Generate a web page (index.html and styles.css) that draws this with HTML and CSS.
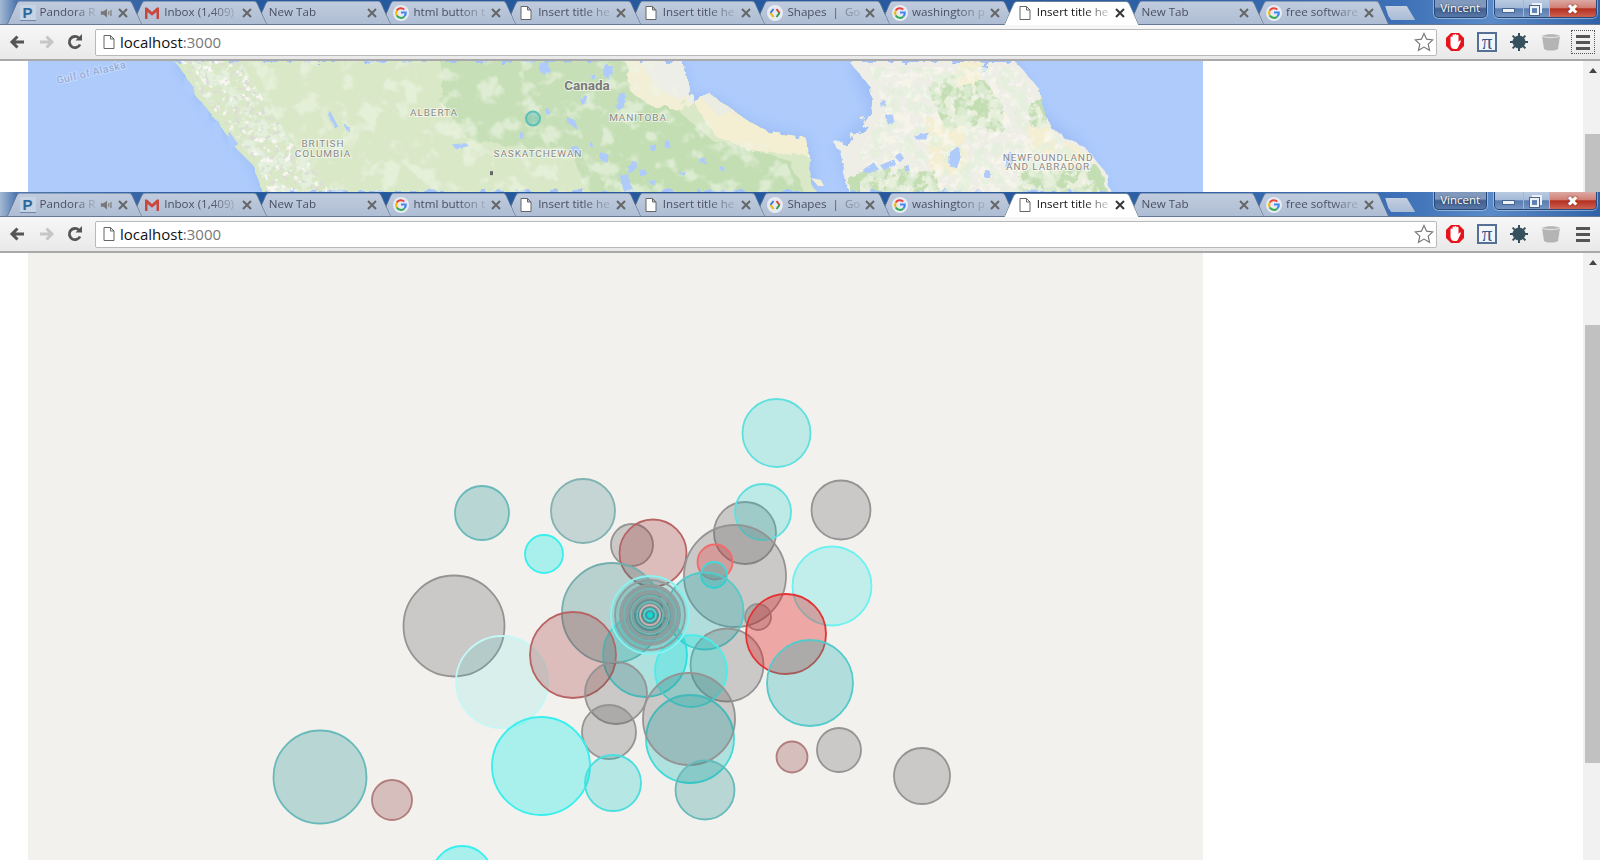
FILE: index.html
```html
<!DOCTYPE html>
<html lang="en">

<head>
    <meta charset="UTF-8">
    <title>Insert title here</title>
    <link rel="stylesheet" href="styles.css">
</head>

<body>
    <svg class="defs" width="0" height="0">
        <symbol id="i-page" viewBox="0 0 16 16"><path d="M3 1.500h6.500L13 5v9.500H3z M9.500 1.500V5H13" fill="#fff" stroke="#666" stroke-width="1"/></symbol>
        <symbol id="i-close" viewBox="0 0 12 12"><path d="M2 2l8 8M10 2l-8 8" stroke="#666" stroke-width="2" fill="none"/></symbol>
        <symbol id="i-speaker" viewBox="0 0 16 12"><path d="M1 4h3l4-3v10L4 8H1z" fill="#777"/><path d="M10 4v4M12.500 2.500v7" stroke="#777" stroke-width="1.300"/></symbol>
        <symbol id="i-gmail" viewBox="0 0 16 16"><path d="M1 14V2.500h2L8 7l5-4.500h2V14h-2.500V7L8 10.800 3.500 7v7z" fill="#c9473f"/></symbol>
        <symbol id="i-google" viewBox="0 0 16 16">
            <circle cx="8" cy="8" r="8" fill="#e6ebf2"/>
            <path d="M3.800 5.500A4.800 4.800 0 0 1 11.300 4.600" stroke="#e8453c" stroke-width="2" fill="none"/>
            <path d="M3.800 5.500A4.800 4.800 0 0 0 3.800 10.500" stroke="#f4b400" stroke-width="2" fill="none"/>
            <path d="M3.800 10.500A4.800 4.800 0 0 0 11.500 11.300" stroke="#34a853" stroke-width="2" fill="none"/>
            <path d="M11.500 11.300A4.800 4.800 0 0 0 12.800 7.500H8" stroke="#4285f4" stroke-width="2" fill="none"/>
        </symbol>
        <symbol id="i-shapes" viewBox="0 0 16 16">
            <circle cx="8" cy="8" r="8" fill="#e6ebf2"/>
            <path d="M6.500 4 3.500 8" stroke="#3f77d8" stroke-width="2" fill="none"/>
            <path d="M3.500 8l3 4" stroke="#f4b400" stroke-width="2" fill="none"/>
            <path d="M9.500 4l3 4" stroke="#d9432f" stroke-width="2" fill="none"/>
            <path d="M12.500 8l-3 4" stroke="#2f9e55" stroke-width="2" fill="none"/>
        </symbol>
        <symbol id="i-back" viewBox="0 0 18 18"><path d="M16 9H5M9.500 3.500 4 9l5.500 5.500" stroke="#555" stroke-width="3" fill="none"/></symbol>
        <symbol id="i-forward" viewBox="0 0 18 18"><path d="M2 9h11M8.500 3.500 14 9l-5.500 5.500" stroke="#c6c6c6" stroke-width="3" fill="none"/></symbol>
        <symbol id="i-reload" viewBox="0 0 18 18"><path d="M14 11.500A5.600 5.600 0 1 1 12.800 5" stroke="#555" stroke-width="2.800" fill="none"/><path d="M9.500 7.500h6.500V1z" fill="#555"/></symbol>
        <symbol id="i-star" viewBox="0 0 20 20"><path d="M10 1.500l2.600 5.700 6.200.7-4.600 4.200 1.300 6.100L10 15.100l-5.500 3.100 1.300-6.100L1.200 7.900l6.200-.7z" fill="#fff" stroke="#777" stroke-width="1.200"/></symbol>
        <symbol id="i-adblock" viewBox="0 0 20 20">
            <path d="M6 1h8l5 5v8l-5 5H6l-5-5V6z" fill="#e8141c"/>
            <path d="M5.500 9V5.500a1 1 0 0 1 2 0V3.500a1 1 0 0 1 2 0V3a1 1 0 0 1 2 0v.8a1 1 0 0 1 2 0V10l1-1.200c.8-.6 1.800.1 1.200 1L13 15.500c-.4.800-1 1.500-2 1.500H9.500c-2.500 0-4-2-4-4.500z" fill="#fff"/>
        </symbol>
        <symbol id="i-burst" viewBox="0 0 20 20">
            <path d="M10 1v18M1 10h18M3.600 3.600l12.800 12.800M16.400 3.600 3.600 16.400" stroke="#37505e" stroke-width="2"/>
            <circle cx="10" cy="10" r="6.500" fill="#37505e"/>
        </symbol>
        <symbol id="i-cup" viewBox="0 0 20 20">
            <path d="M1 4c3-2.500 15-2.500 18 0l-2 13c-3 2-11 2-14 0z" fill="#b4b4b4"/>
            <path d="M1 4c3 2 15 2 18 0" stroke="#dcdcdc" stroke-width="1.500" fill="none"/>
        </symbol>
        <filter id="rough" x="-5%" y="-20%" width="110%" height="140%">
            <feTurbulence type="fractalNoise" baseFrequency="0.08" numOctaves="4" seed="4"/>
            <feDisplacementMap in="SourceGraphic" scale="14"/>
        </filter>
        <filter id="rough-small" x="-5%" y="-20%" width="110%" height="140%">
            <feTurbulence type="fractalNoise" baseFrequency="0.22" numOctaves="2" seed="9"/>
            <feDisplacementMap in="SourceGraphic" scale="4"/>
        </filter>
        <filter id="soft" x="-10%" y="-30%" width="120%" height="160%"><feGaussianBlur stdDeviation="7"/></filter>
        <filter id="snow" x="0" y="0" width="100%" height="100%">
            <feTurbulence type="fractalNoise" baseFrequency="0.14" numOctaves="3" seed="2"/>
            <feColorMatrix values="0 0 0 0 0.94  0 0 0 0 0.93  0 0 0 0 0.90  7 0 0 0 -4"/>
        </filter>
        <filter id="rock" x="0" y="0" width="100%" height="100%">
            <feTurbulence type="fractalNoise" baseFrequency="0.2" numOctaves="3" seed="7"/>
            <feColorMatrix values="0 0 0 0 0.72  0 0 0 0 0.72  0 0 0 0 0.68  8 0 0 0 -4.500"/>
        </filter>
        <filter id="moss" x="0" y="0" width="100%" height="100%">
            <feTurbulence type="fractalNoise" baseFrequency="0.07" numOctaves="3" seed="12"/>
            <feColorMatrix values="0 0 0 0 0.77  0 0 0 0 0.87  0 0 0 0 0.71  9 0 0 0 -4.300"/>
        </filter>
        <filter id="pale" x="0" y="0" width="100%" height="100%">
            <feTurbulence type="fractalNoise" baseFrequency="0.05" numOctaves="3" seed="21"/>
            <feColorMatrix values="0 0 0 0 0.85  0 0 0 0 0.91  0 0 0 0 0.78  6 0 0 0 -3.100"/>
        </filter>
        <filter id="straw" x="0" y="0" width="100%" height="100%">
            <feTurbulence type="fractalNoise" baseFrequency="0.09" numOctaves="3" seed="31"/>
            <feColorMatrix values="0 0 0 0 0.96  0 0 0 0 0.93  0 0 0 0 0.82  9 0 0 0 -4.600"/>
        </filter>
        <clipPath id="rockies-clip"><path d="M180 60 205 98 232 132 258 165 268 192H330L300 150 270 110 240 60z"/></clipPath>
        <clipPath id="west-clip"><path d="M240 60 270 110 300 150 330 192H800L780 150 715 125 680 100 670 60z"/></clipPath>
        <clipPath id="east-clip"><path d="M870 66 885 110 860 150 860 192H1100L1085 160 1050 130 1032 90 1015 66z"/></clipPath>
    </svg>

    <div class="window window-top">
        <div class="tabstrip">
            <div class="tab"><span class="fav-p">P</span><span class="tab-title short">Pandora R</span><svg class="speaker"><use href="#i-speaker"/></svg><svg class="x"><use href="#i-close"/></svg></div>
            <div class="tab"><svg class="fav"><use href="#i-gmail"/></svg><span class="tab-title">Inbox (1,409)</span><svg class="x"><use href="#i-close"/></svg></div>
            <div class="tab no-fav"><span class="tab-title">New Tab</span><svg class="x"><use href="#i-close"/></svg></div>
            <div class="tab"><svg class="fav"><use href="#i-google"/></svg><span class="tab-title">html button t</span><svg class="x"><use href="#i-close"/></svg></div>
            <div class="tab"><svg class="fav"><use href="#i-page"/></svg><span class="tab-title">Insert title he</span><svg class="x"><use href="#i-close"/></svg></div>
            <div class="tab"><svg class="fav"><use href="#i-page"/></svg><span class="tab-title">Insert title he</span><svg class="x"><use href="#i-close"/></svg></div>
            <div class="tab"><svg class="fav"><use href="#i-shapes"/></svg><span class="tab-title">Shapes &nbsp;|&nbsp; Go</span><svg class="x"><use href="#i-close"/></svg></div>
            <div class="tab"><svg class="fav"><use href="#i-google"/></svg><span class="tab-title">washington p</span><svg class="x"><use href="#i-close"/></svg></div>
            <div class="tab active"><svg class="fav"><use href="#i-page"/></svg><span class="tab-title">Insert title he</span><svg class="x"><use href="#i-close"/></svg></div>
            <div class="tab no-fav"><span class="tab-title">New Tab</span><svg class="x"><use href="#i-close"/></svg></div>
            <div class="tab"><svg class="fav"><use href="#i-google"/></svg><span class="tab-title">free software</span><svg class="x"><use href="#i-close"/></svg></div>
            <div class="new-tab"></div>
            <div class="win-area">
                <div class="profile">Vincent</div>
                <div class="win-controls">
                    <div class="win-btn win-min"><span></span></div>
                    <div class="win-btn win-max"><span></span></div>
                    <div class="win-btn win-close">✖</div>
                </div>
            </div>
        </div>
        <div class="toolbar">
            <svg class="nav"><use href="#i-back"/></svg>
            <svg class="nav"><use href="#i-forward"/></svg>
            <svg class="nav"><use href="#i-reload"/></svg>
            <div class="omnibox">
                <svg class="omni-page"><use href="#i-page"/></svg>
                <span class="url">localhost<span class="url-port">:3000</span></span>
                <svg class="omni-star"><use href="#i-star"/></svg>
            </div>
            <div class="extensions">
                <svg class="ext"><use href="#i-adblock"/></svg>
                <div class="ext pi">π</div>
                <svg class="ext"><use href="#i-burst"/></svg>
                <svg class="ext"><use href="#i-cup"/></svg>
                <div class="menu focused"><span></span><span></span><span></span></div>
            </div>
        </div>
        <div class="page">
            <div class="page-main">
                <svg class="map" viewBox="28 60 1175 132" preserveAspectRatio="none">
                    <rect x="28" y="60" width="1175" height="132" fill="#aecbfc"/>
                    <g filter="url(#soft)" fill="#93b6f3" opacity=".65">
                        <path d="M174 60 198 98 225 132 253 165 261 192H816L808 138 750 122 711 94 691 98 683 60z"/>
                        <path d="M849 60 871 112 837 145 849 192H1110L1083 145 1043 112 1015 60z"/>
                    </g>
                    <g filter="url(#rough)">
                        <!-- west land -->
                        <path fill="#d9e8c7" d="M174 60 186 75 198 98 210 112 225 132 233 145 253 165 261 192H816L810 178 808 155 806 138 770 132 750 122 727 105 711 94 691 98 683 60z"/>
                        <path fill="#c6dfb6" d="M440 60H640L650 100 680 110 700 192H590L570 150 470 140 440 100z"/>
                        <path fill="#f3efd6" d="M625 60H683L691 98 680 110 650 105 630 90z"/>
                        <path fill="#c3deb3" d="M620 105 650 104 680 112 712 140 790 160 803 192H600z"/>
                        <path fill="#f4eed2" d="M691 98 711 94 727 105 750 122 770 132 806 138 808 155 775 152 745 150 715 135z"/>
                        <path fill="#eeeee8" d="M683 60H640L655 85 680 100 691 98z"/>
                        <path fill="#ecede2" d="M700 96 711 94 727 105 738 116 715 112z"/>
                        <!-- east land -->
                        <path fill="#eeeee7" d="M849 60 869 85 871 112 857 135 837 145 841 162 849 192H1110L1106 172 1083 145 1055 132 1043 112 1039 88 1015 60H988V72H968V60z"/>
                        <path fill="#f4eed2" d="M925 118 965 122 966 175 930 172z"/>
                        <path fill="#f4eed2" d="M1027 125 1052 125 1058 152 1030 155z"/>
                        <path fill="#c4deb4" d="M930 88 950 74 985 80 1005 108 1000 130 965 125 945 128z"/>
                        <path fill="#c4deb4" d="M1030 105 1042 95 1045 120 1034 130z"/>
                        <path fill="#c4deb4" d="M850 172 935 170 940 192H850z"/>
                        <path fill="#c4deb4" d="M1018 172 1100 168 1108 192H1018z"/>
                        <path fill="#f4eed2" d="M960 60 985 62 975 85 955 85z"/>
                        <path fill="#f4eed2" d="M1065 140 1090 155 1080 170 1060 162z"/>
                    </g>
                    <path fill="#f2eed6" d="M811 178l10 2 3 6-6 0z"/>
                    <g clip-path="url(#west-clip)">
                        <rect x="240" y="60" width="570" height="132" filter="url(#pale)" opacity=".6"/>
                    </g>
                    <g clip-path="url(#east-clip)">
                        <rect x="860" y="60" width="250" height="132" filter="url(#straw)" opacity=".7"/>
                        <rect x="860" y="60" width="250" height="132" filter="url(#moss)" opacity=".7"/>
                        <rect x="860" y="60" width="250" height="132" filter="url(#snow)" opacity=".6"/>
                    </g>
                    <g clip-path="url(#rockies-clip)">
                        <rect x="170" y="60" width="170" height="132" filter="url(#moss)"/>
                        <rect x="170" y="60" width="170" height="132" filter="url(#snow)"/>
                        <rect x="170" y="60" width="170" height="132" filter="url(#rock)"/>
                    </g>
                    <g filter="url(#rough-small)" fill="#aecbfc">
                        <!-- islands and fjords on the west coast -->
                        <path d="M185 76l10 12-3 10-9-10zM201 100l8 12-2 10-8-12zM216 118l6 14-4 8-6-14zM230 132l7 10-3 8-7-8z"/>
                        <!-- lakes -->
                        <path d="M540 62l8-1 2 8-6 5-5-5zM605 64l7 0 1 8-6 6-5-6zM592 74l3 0 0 4-4 1zM580 98l6-4 1 8-5 2zM620 94l5-2 0 12-6 6-3-4zM567 116l8 4 3 10-5-4-6-4zM545 108l4 0 1 6-4 0zM452 144l14-1 3 3-14 2zM570 146l8 0 2 8-8 0zM600 152l8 2 0 8-8-2zM520 132l4 0 0 6-4 0zM330 110l8 16-3 2-7-14zM345 124l6 4-1 4-5-4zM590 142l3 0 0 5-3 0zM628 166l8-6 1 8-8 6zM650 146l6-2 0 6-5 1zM665 140l5 0 0 6-5 1zM640 170l6-1 0 6-6 1zM650 180l6 0-2 5-5-1zM700 158l5 0 1 5-6 0zM720 166l4 1 0 3-4 0zM680 172l6 0 0 3-5 0zM620 176l8-2 4 14-8 4z"/>
                        <path d="M885 115l8-1 1 7-6 3zM915 135l14-3-3 7-10 0zM950 152l8-6 3 10-4 12-8-2zM862 170l12-8 4 6-10 6zM880 165l14-6 2 5-12 6zM896 158l4-6 4 6-4 4zM905 165l4 0 0 6-4 0zM880 100l6 0 0 4-6 2zM1005 155l6-4 2 8-6 10zM985 170l5 0 0 8-5 0z"/>
                    </g>
                    <g class="map-labels">
                        <text class="ml-sea" transform="translate(92 75) rotate(-13.500)">Gulf of Alaska</text>
                        <text class="ml-country" x="587" y="89">Canada</text>
                        <text class="ml-prov" x="434" y="115">ALBERTA</text>
                        <text class="ml-prov" x="323" y="147">BRITISH</text>
                        <text class="ml-prov" x="323" y="157">COLUMBIA</text>
                        <text class="ml-prov" x="538" y="157">SASKATCHEWAN</text>
                        <text class="ml-prov" x="638" y="120">MANITOBA</text>
                        <text class="ml-prov" x="1048" y="161">NEWFOUNDLAND</text>
                        <text class="ml-prov" x="1048" y="170">AND LABRADOR</text>
                    </g>
                    <rect x="490" y="171" width="3" height="4" fill="#666"/>
                    <circle cx="533" cy="118" r="7" class="c-teal-map"/>
                </svg>
            </div>
            <div class="scrollbar scroll-top"><div class="scroll-arrow"></div><div class="scroll-thumb"></div></div>
        </div>
    </div>

    <div class="window window-bottom">
        <div class="tabstrip">
            <div class="tab"><span class="fav-p">P</span><span class="tab-title short">Pandora R</span><svg class="speaker"><use href="#i-speaker"/></svg><svg class="x"><use href="#i-close"/></svg></div>
            <div class="tab"><svg class="fav"><use href="#i-gmail"/></svg><span class="tab-title">Inbox (1,409)</span><svg class="x"><use href="#i-close"/></svg></div>
            <div class="tab no-fav"><span class="tab-title">New Tab</span><svg class="x"><use href="#i-close"/></svg></div>
            <div class="tab"><svg class="fav"><use href="#i-google"/></svg><span class="tab-title">html button t</span><svg class="x"><use href="#i-close"/></svg></div>
            <div class="tab"><svg class="fav"><use href="#i-page"/></svg><span class="tab-title">Insert title he</span><svg class="x"><use href="#i-close"/></svg></div>
            <div class="tab"><svg class="fav"><use href="#i-page"/></svg><span class="tab-title">Insert title he</span><svg class="x"><use href="#i-close"/></svg></div>
            <div class="tab"><svg class="fav"><use href="#i-shapes"/></svg><span class="tab-title">Shapes &nbsp;|&nbsp; Go</span><svg class="x"><use href="#i-close"/></svg></div>
            <div class="tab"><svg class="fav"><use href="#i-google"/></svg><span class="tab-title">washington p</span><svg class="x"><use href="#i-close"/></svg></div>
            <div class="tab active"><svg class="fav"><use href="#i-page"/></svg><span class="tab-title">Insert title he</span><svg class="x"><use href="#i-close"/></svg></div>
            <div class="tab no-fav"><span class="tab-title">New Tab</span><svg class="x"><use href="#i-close"/></svg></div>
            <div class="tab"><svg class="fav"><use href="#i-google"/></svg><span class="tab-title">free software</span><svg class="x"><use href="#i-close"/></svg></div>
            <div class="new-tab"></div>
            <div class="win-area">
                <div class="profile">Vincent</div>
                <div class="win-controls">
                    <div class="win-btn win-min"><span></span></div>
                    <div class="win-btn win-max"><span></span></div>
                    <div class="win-btn win-close">✖</div>
                </div>
            </div>
        </div>
        <div class="toolbar">
            <svg class="nav"><use href="#i-back"/></svg>
            <svg class="nav"><use href="#i-forward"/></svg>
            <svg class="nav"><use href="#i-reload"/></svg>
            <div class="omnibox">
                <svg class="omni-page"><use href="#i-page"/></svg>
                <span class="url">localhost<span class="url-port">:3000</span></span>
                <svg class="omni-star"><use href="#i-star"/></svg>
            </div>
            <div class="extensions">
                <svg class="ext"><use href="#i-adblock"/></svg>
                <div class="ext pi">π</div>
                <svg class="ext"><use href="#i-burst"/></svg>
                <svg class="ext"><use href="#i-cup"/></svg>
                <div class="menu"><span></span><span></span><span></span></div>
            </div>
        </div>
        <div class="page">
            <div class="page-main">
                <svg class="bubbles" viewBox="28 253 1175 607">
                    <rect x="28" y="253" width="1175" height="607" fill="#f2f1ee"/>
                    <circle class="aqua-pale" cx="776.500" cy="433" r="34"/>
                    <circle class="teal" cx="482" cy="513" r="27"/>
                    <circle class="slate" cx="583" cy="511" r="32"/>
                    <circle class="grey" cx="841" cy="510" r="29.500"/>
                    <circle class="grey" cx="745" cy="533" r="31"/>
                    <circle class="aqua-pale" cx="763" cy="512" r="28"/>
                    <circle class="cyan" cx="544" cy="554" r="19"/>
                    <circle class="grey" cx="632" cy="545" r="21"/>
                    <circle class="maroon" cx="653" cy="553" r="33.500"/>
                    <circle class="grey" cx="735" cy="576" r="51"/>
                    <circle class="rose" cx="715" cy="562" r="17.500"/>
                    <circle class="aqua-strong" cx="714" cy="575" r="13"/>
                    <circle class="cyan-pale" cx="832" cy="586" r="39.500"/>
                    <circle class="slate-dark" cx="612" cy="613" r="50"/>
                    <circle class="aqua" cx="705" cy="611" r="38.500"/>
                    <circle class="grey" cx="758" cy="617" r="13"/>
                    <circle class="grey" cx="454" cy="626" r="50.500"/>
                    <circle class="cyan-faint" cx="502" cy="682" r="46"/>
                    <circle class="aqua-strong" cx="645" cy="655" r="42"/>
                    <circle class="maroon" cx="573" cy="655" r="43"/>
                    <circle class="grey" cx="727" cy="665" r="36.500"/>
                    <circle class="cyan-mid" cx="691" cy="671" r="36"/>
                    <circle class="red" cx="786" cy="634" r="40"/>
                    <circle class="aqua" cx="810" cy="683" r="43"/>
                    <circle class="grey" cx="616" cy="693" r="31"/>
                    <circle class="aqua-strong" cx="690" cy="739" r="44"/>
                    <circle class="grey" cx="689" cy="719" r="46"/>
                    <circle class="grey" cx="609" cy="732" r="27"/>
                    <circle class="cyan" cx="541" cy="766" r="49"/>
                    <circle class="aqua-mid" cx="613" cy="783" r="28"/>
                    <circle class="teal" cx="705" cy="790" r="29.500"/>
                    <circle class="grey" cx="839" cy="750" r="22"/>
                    <circle class="wine" cx="792" cy="757" r="15.500"/>
                    <circle class="grey" cx="922" cy="776" r="28"/>
                    <circle class="teal" cx="320" cy="777" r="46.500"/>
                    <circle class="wine" cx="392" cy="800" r="20"/>
                    <circle class="cyan" cx="462" cy="876" r="30"/>
                    <!-- the bunch of points on the same spot -->
                    <circle class="ring-halo" cx="650" cy="615" r="39"/>
                    <circle class="ring-grey" cx="650" cy="615" r="35"/>
                    <circle class="ring-grey" cx="650" cy="615" r="30"/>
                    <circle class="ring-grey" cx="650" cy="615" r="28"/>
                    <circle class="ring-teal" cx="650" cy="615" r="26"/>
                    <circle class="ring-grey" cx="650" cy="615" r="24"/>
                    <circle class="ring-grey" cx="650" cy="615" r="22"/>
                    <circle class="ring-teal" cx="650" cy="615" r="19"/>
                    <circle class="ring-grey" cx="650" cy="615" r="17"/>
                    <circle class="ring-teal" cx="650" cy="615" r="13"/>
                    <circle class="ring-rose" cx="650" cy="615" r="10"/>
                    <circle class="ring-cyan" cx="650" cy="615" r="6"/>
                    <circle class="dot" cx="650" cy="615" r="2"/>
                </svg>
            </div>
            <div class="scrollbar scroll-bottom"><div class="scroll-arrow"></div><div class="scroll-thumb"></div></div>
        </div>
    </div>
</body>

</html>
```

FILE: styles.css
```css
* {
    box-sizing: border-box;
}

html, body {
    margin: 0;
    height: 860px;
    overflow: hidden;
    background: #fff;
}

.defs {
    position: absolute;
}

.window {
    display: flex;
    flex-direction: column;
    overflow: hidden;
}
.window-top {
    height: 192px;
}
.window-bottom {
    height: 668px;
}

/* tab row */
.tabstrip {
    display: flex;
    flex: none;
    height: 25px;
    padding-left: 7px;
    border-bottom: 1px solid #66789a;
    background: linear-gradient(90deg, #a4b9d2 0, #4f78b1 16px, #255a9e 220px, #27599f 1000px, #3d70b6 1400px, #5a8ac8 1490px, #2f62a8 1600px);
}

.tab {
    position: relative;
    display: flex;
    flex: none;
    align-items: center;
    width: 135px;
    height: 23px;
    margin-top: 1px;
    margin-right: -10.350px;
    padding-left: 12.500px;
    font: 11.600px "Open Sans", sans-serif;
    color: #4b4f63;
}
.tab::before, .tab::after {
    content: "";
    position: absolute;
    z-index: -1;
    top: 0;
    bottom: 0;
    width: 60%;
    border-top: 1px solid #8c9db8;
    background: linear-gradient(#c0cbdd, #aebdd4);
}
.tab::before {
    left: 5px;
    border-left: 1px solid #64768f;
    border-top-left-radius: 3px;
    transform: skewX(-24deg);
}
.tab::after {
    right: 5px;
    border-right: 1px solid #64768f;
    border-top-right-radius: 3px;
    transform: skewX(24deg);
}
.tab:nth-child(1) { z-index: 11; }
.tab:nth-child(2) { z-index: 10; }
.tab:nth-child(3) { z-index: 9; }
.tab:nth-child(4) { z-index: 8; }
.tab:nth-child(5) { z-index: 7; }
.tab:nth-child(6) { z-index: 6; }
.tab:nth-child(7) { z-index: 5; }
.tab:nth-child(8) { z-index: 4; }
.tab:nth-child(10) { z-index: 3; }
.tab:nth-child(11) { z-index: 2; }
.tab.active {
    z-index: 12;
    color: #111;
}
.tab.active::before, .tab.active::after {
    bottom: -1px;
    background: #fff;
    border-color: #6f7f98;
}

.fav, .fav-p {
    flex: none;
    width: 16px;
    height: 16px;
    margin-right: 4px;
}
.fav-p {
    font: bold 15px/15px "Liberation Sans", sans-serif;
    text-align: center;
    color: #2a6a9e;
    background: #c7d2e2;
    border-bottom: 1px solid #6e88a8;
}
.tab-title {
    flex: none;
    width: 74px;
    margin-bottom: 2px;
    overflow: hidden;
    white-space: nowrap;
    mask-image: linear-gradient(90deg, #000 62%, rgba(0, 0, 0, .25) 94%);
}
.tab-title.short {
    width: 56px;
}
.tab.no-fav .tab-title {
    width: 94px;
}
.speaker {
    flex: none;
    width: 14px;
    height: 12px;
    margin-left: 4px;
}
.x {
    flex: none;
    width: 12px;
    height: 12px;
    margin-left: 3px;
}
.tab.active .x {
    filter: brightness(.55);
}

.new-tab {
    flex: none;
    width: 30px;
    height: 14px;
    margin: 6px 0 0 7px;
    background: linear-gradient(#c3cfe0, #a9bbd5);
    clip-path: polygon(0 0, 72% 0, 100% 100%, 20% 100%, 10% 70%);
}

.win-area {
    display: flex;
    gap: 7px;
    margin-left: 18.500px;
}
.profile {
    width: 53px;
    height: 18px;
    border: 1px solid #26477a;
    border-top: 0;
    border-radius: 0 0 5px 5px;
    font: 11.500px/16px "Open Sans", sans-serif;
    text-align: center;
    color: #fff;
    text-shadow: 0 0 2px #123;
    background: linear-gradient(#7f98bc 0, #8099bd 40%, #3f6093 52%, #5877a6 100%);
    box-shadow: 0 0 0 1px rgba(255, 255, 255, .4);
}
.win-controls {
    display: flex;
    height: 18px;
    width: 103px;
    border: 1px solid #26477a;
    border-top: 0;
    border-radius: 0 0 5px 5px;
    overflow: hidden;
    box-shadow: 0 0 0 1px rgba(255, 255, 255, .4);
}
.win-btn {
    display: flex;
    align-items: center;
    justify-content: center;
    border-right: 1px solid #a3b7d2;
    background: linear-gradient(#b9cbe2 0, #a4bad9 45%, #587cb0 52%, #7695c2 100%);
}
.win-min {
    width: 29px;
}
.win-min span {
    width: 13px;
    height: 5px;
    margin-top: 3px;
    background: #eef2f7;
    border: 1px solid #48658f;
}
.win-max {
    width: 26px;
}
.win-max span {
    position: relative;
    width: 9px;
    height: 9px;
    margin: 3px 3px 0 0;
    border: 2px solid #eef2f7;
    outline: 1px solid #48658f;
}
/* the second square behind, for the restore icon */
.win-max span::before {
    content: "";
    position: absolute;
    top: -5px;
    right: -5px;
    width: 8px;
    height: 8px;
    border-top: 2px solid #eef2f7;
    border-right: 2px solid #eef2f7;
}
.win-close {
    flex: 1;
    border-right: 0;
    font: 14px/1 "DejaVu Sans", sans-serif;
    color: #fff;
    text-shadow: 0 0 2px #6a1a10;
    background: linear-gradient(#dcaaa5 0, #d27f74 45%, #b5301f 52%, #cc6255 100%);
}

/* address bar row */
.toolbar {
    display: flex;
    flex: none;
    align-items: center;
    height: 36px;
    border-bottom: 2px solid #a9a9a9;
    background: linear-gradient(#f7f7f7, #e9e9e9);
}
.nav {
    flex: none;
    width: 18px;
    height: 18px;
    margin-left: 8px;
    margin-right: 4px;
}
.nav:nth-child(2) {
    margin-left: 8px;
}
.nav:nth-child(3) {
    margin-left: 6px;
}
.omnibox {
    display: flex;
    align-items: center;
    width: 1342px;
    height: 27px;
    margin-left: 7px;
    padding-left: 5px;
    border: 1px solid #b9b9b9;
    border-radius: 2px;
    background: #fff;
}
.omni-page {
    flex: none;
    width: 16px;
    height: 16px;
}
.url {
    margin-left: 3px;
    font: 15px "Open Sans", sans-serif;
    color: #111;
}
.url-port {
    color: #777;
}
.omni-star {
    width: 20px;
    height: 20px;
    margin-left: auto;
    margin-right: 2px;
}
.extensions {
    display: flex;
    gap: 12px;
    align-items: center;
    margin-left: 8px;
}
.ext {
    flex: none;
    width: 20px;
    height: 20px;
}
.pi {
    display: flex;
    align-items: center;
    justify-content: center;
    border: 2px solid #566f97;
    font: 21px/1 "Liberation Serif", serif;
    color: #3a5a8c;
    background: #f2f5f8;
}
.menu {
    display: flex;
    flex: none;
    flex-direction: column;
    gap: 3px;
    align-items: center;
    justify-content: center;
    width: 22px;
    height: 22px;
    margin-left: -1px;
}
.menu.focused {
    outline: 1px dotted #555;
}
.menu span {
    width: 14px;
    height: 3px;
    background: #555;
}

/* page area */
.page {
    display: flex;
    flex: 1;
    min-height: 0;
}
.page-main {
    flex: 1;
    min-width: 0;
    padding-left: 28px;
}
.map, .bubbles {
    display: block;
    width: 1175px;
    height: 100%;
}
.map-labels text {
    font-family: Roboto, sans-serif;
    text-anchor: middle;
    paint-order: stroke;
    stroke: rgba(255, 255, 255, .6);
    stroke-width: 2px;
    fill: #8a8a86;
}
.map-labels .ml-sea {
    font-size: 10.500px;
    letter-spacing: .4px;
    stroke: rgba(255, 255, 255, .3);
    fill: #8ea7d2;
}
.map-labels .ml-country {
    font-size: 13.500px;
    font-weight: 700;
    fill: #7a7a78;
}
.ml-prov {
    font-size: 10px;
    letter-spacing: .9px;
}
.c-teal-map {
    fill: rgba(40, 170, 170, .3);
    stroke: #5cc0ba;
    stroke-width: 2;
}

/* bubbles */
.bubbles circle:not(:first-child) {
    stroke-width: 1.800;
}
.grey { fill: rgba(85, 85, 85, .25); stroke: #949494; }
.slate { fill: rgba(55, 125, 125, .24); stroke: #7fb2b2; }
.slate-dark { fill: rgba(40, 125, 125, .28); stroke: #76aeae; }
.teal { fill: rgba(30, 140, 140, .27); stroke: #68baba; }
.aqua { fill: rgba(25, 180, 180, .3); stroke: #55caca; }
.aqua-mid { fill: rgba(20, 205, 205, .27); stroke: #4adede; }
.aqua-strong { fill: rgba(20, 190, 190, .3); stroke: #40dada; }
.aqua-pale { fill: rgba(20, 210, 205, .24); stroke: #5ee0de; }
.cyan { fill: rgba(0, 235, 230, .3); stroke: #37f0ee; }
.cyan-mid { fill: rgba(0, 235, 230, .28); stroke: #4cecea; }
.cyan-pale { fill: rgba(0, 225, 225, .2); stroke: #6cf2f0; }
.cyan-faint { fill: rgba(0, 225, 225, .1); stroke: #c4f7f5; }
.red { fill: rgba(230, 25, 25, .34); stroke: #e23434; }
.rose { fill: rgba(240, 40, 40, .28); stroke: #f26a6a; }
.maroon { fill: rgba(155, 35, 35, .25); stroke: #b86464; }
.wine { fill: rgba(130, 40, 40, .25); stroke: #b07c7c; }
.ring-halo { fill: rgba(0, 225, 225, .16); stroke: #8af3f1; }
.ring-grey { fill: rgba(70, 90, 90, .11); stroke: #8f9d9d; }
.ring-teal { fill: rgba(20, 150, 150, .08); stroke: #74b4b4; }
.ring-rose { fill: rgba(190, 90, 90, .06); stroke: #d0b0b0; }
.ring-cyan { fill: rgba(0, 220, 220, .12); stroke: #4cd4d4; }
.dot { fill: #10d8d8; stroke: #10d8d8; }

/* scrollbars */
.scrollbar {
    flex: none;
    width: 17px;
    padding-left: 2px;
    background: #f1f1f1;
}
.scroll-arrow {
    width: 0;
    height: 0;
    margin: 7px auto 0;
    border: 4px solid transparent;
    border-top: 0;
    border-bottom: 5px solid #444;
}
.scroll-thumb {
    background: #c1c1c1;
}
.scroll-top .scroll-thumb {
    height: 70px;
    margin-top: 61px;
}
.scroll-bottom .scroll-thumb {
    height: 438px;
    margin-top: 60px;
}
```
